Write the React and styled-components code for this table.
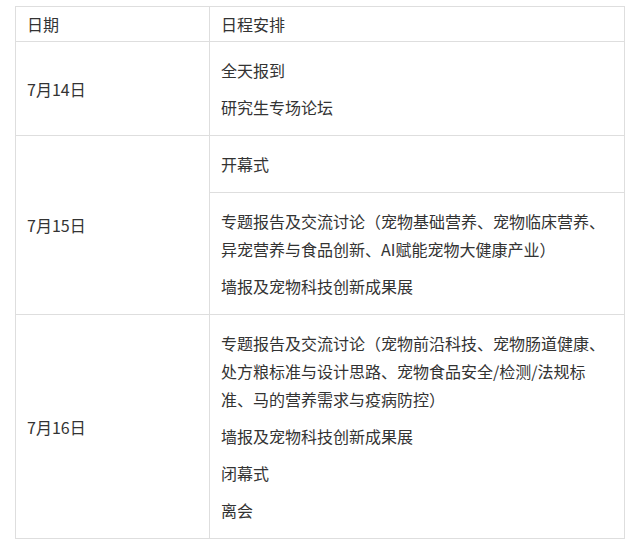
import React from "react";
import styled, { createGlobalStyle } from "styled-components";

const GlobalStyle = createGlobalStyle`
  body {
    margin: 0;
    background: #fff;
    font-family: "Noto Sans CJK SC", "Noto Sans", sans-serif;
    color: #333;
  }
`;

const Page = styled.div`
  padding: 6px 15px;
`;

const Table = styled.table`
  width: 610px;
  border-collapse: collapse;
  table-layout: fixed;
  font-size: 16px;
  line-height: 28px;
`;

const Col = styled.col`
  width: ${(p) => p.$width || "auto"};
`;

const HeadCell = styled.th`
  text-align: left;
  font-weight: normal;
  padding: 3px 11px;
  border: 1px solid #dedede;
`;

const Cell = styled.td`
  padding: 14px 11px;
  border: 1px solid #dedede;
  vertical-align: middle;
`;

const Item = styled.p`
  margin: 0;
  & + & {
    margin-top: 9px;
  }
`;

const schedule = [
  { date: "7月14日", rows: [["全天报到", "研究生专场论坛"]] },
  {
    date: "7月15日",
    rows: [
      ["开幕式"],
      [
        "专题报告及交流讨论（宠物基础营养、宠物临床营养、异宠营养与食品创新、AI赋能宠物大健康产业）",
        "墙报及宠物科技创新成果展",
      ],
    ],
  },
  {
    date: "7月16日",
    rows: [
      [
        "专题报告及交流讨论（宠物前沿科技、宠物肠道健康、处方粮标准与设计思路、宠物食品安全/检测/法规标准、马的营养需求与疫病防控）",
        "墙报及宠物科技创新成果展",
        "闭幕式",
        "离会",
      ],
    ],
  },
];

export default function App() {
  return (
    <Page>
      <GlobalStyle />
      <Table>
        <colgroup>
          <Col $width="194px" />
          <Col />
        </colgroup>
        <thead>
          <tr>
            <HeadCell>日期</HeadCell>
            <HeadCell>日程安排</HeadCell>
          </tr>
        </thead>
        <tbody>
          {schedule.map((day) =>
            day.rows.map((items, i) => (
              <tr key={day.date + i}>
                {i === 0 && <Cell rowSpan={day.rows.length}>{day.date}</Cell>}
                <Cell>
                  {items.map((text) => (
                    <Item key={text}>{text}</Item>
                  ))}
                </Cell>
              </tr>
            ))
          )}
        </tbody>
      </Table>
    </Page>
  );
}
